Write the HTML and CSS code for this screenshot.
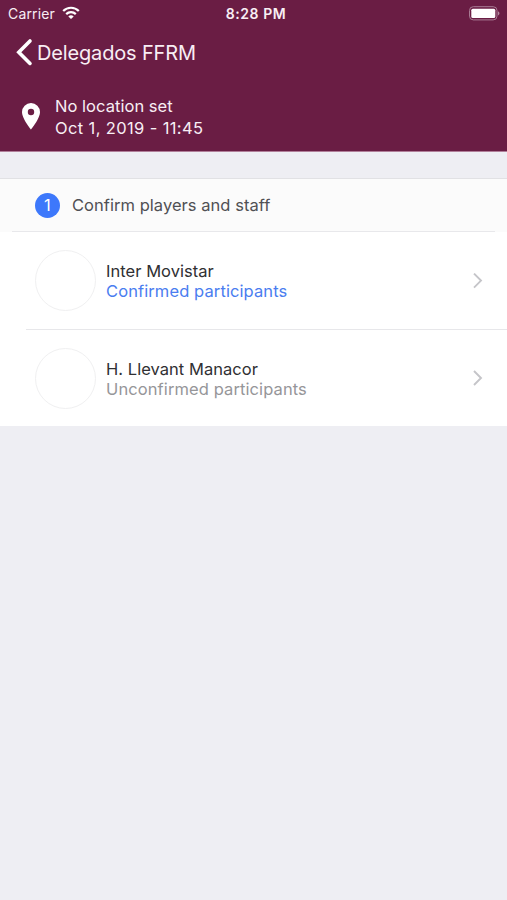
FILE: index.html
```html
<!DOCTYPE html>
<html lang="en">
<head>
<meta charset="utf-8">
<title>Delegados FFRM</title>
<link rel="stylesheet" href="styles.css">
</head>
<body>
<header class="header">
  <div class="status">
    <div class="status-left"><span class="carrier">Carrier</span>
      <svg class="wifi" width="18" height="14" viewBox="0 0 18 14" fill="none" stroke="#fff" stroke-width="2.200"><path d="M1.200 5.100C5.500.6 12.500.6 16.800 5.100M4.200 8.100c2.700-2.700 6.900-2.700 9.600 0"/><path d="M6.300 10.400Q9 8.200 11.700 10.400L9 13.100Z" fill="#fff" stroke="none"/></svg>
    </div>
    <span class="time">8:28 PM</span>
    <svg class="battery" width="32" height="15" viewBox="0 0 32 15"><rect x="1.500" y=".7" width="27.500" height="13.200" rx="3.800" fill="none" stroke="#a87c94"/><rect x="3.300" y="2.700" width="24" height="9.200" rx="1.500" fill="#fff"/><path d="M30 5.200c2 .8 2 3.400 0 4.200Z" fill="#b38aa0"/></svg>
  </div>
  <nav class="nav">
    <svg class="back" width="18" height="28" viewBox="0 0 18 28" fill="none" stroke="#fff" stroke-width="3.600" stroke-linecap="round"><path d="M15 3 3.800 14.200l11.200 11.200"/></svg>
    <span class="title">Delegados FFRM</span>
  </nav>
  <div class="match">
    <svg class="pin" width="18" height="27" viewBox="0 0 18 27"><path fill="#fff" fill-rule="evenodd" d="M9 0a9 9 0 0 0-9 9c0 6.700 9 17.600 9 17.600S18 15.700 18 9a9 9 0 0 0-9-9Zm0 5.800a3.200 3.200 0 1 1 0 6.400 3.200 3.200 0 0 1 0-6.400Z"/></svg>
    <div class="info"><div><span class="location">No location set</span></div><div><span class="date">Oct 1, 2019 - 11:45</span></div></div>
  </div>
</header>
<main class="content">
  <div class="step"><span class="number">1</span><span class="step-title">Confirm players and staff</span></div>
  <div class="team">
    <div class="avatar"></div>
    <div class="details"><div><span class="name">Inter Movistar</span></div><div><span class="state confirmed">Confirmed participants</span></div></div>
    <svg class="chevron" width="10" height="16" viewBox="0 0 10 16" fill="none" stroke="#c5c5c9" stroke-width="1.900"><path d="m1 .6 7 7-7 7"/></svg>
  </div>
  <div class="team">
    <div class="avatar"></div>
    <div class="details"><div><span class="name">H. Llevant Manacor</span></div><div><span class="state">Unconfirmed participants</span></div></div>
    <svg class="chevron" width="10" height="16" viewBox="0 0 10 16" fill="none" stroke="#c5c5c9" stroke-width="1.900"><path d="m1 1 7 7-7 7"/></svg>
  </div>
</main>
</body>
</html>
```
FILE: styles.css
```css
* { box-sizing: border-box; }
body { margin: 0; min-height: 900px; background: #eeeef3; font-family: Inter, sans-serif; font-size: 16.5px; letter-spacing: .04px; }
svg { display: block; flex: none; }
span { white-space: nowrap; }
.header { height: 152px; background: #6a1d44; border-bottom: 1px solid #b17f9a; color: #f8eef4; }
.status { height: 26px; display: grid; grid-template-columns: 1fr auto 1fr; align-items: center; padding: 0 7px 0 8px; }
.status-left { display: flex; align-items: center; gap: 7px; }
.carrier { font-size: 14px; letter-spacing: .15px; }
.time { font-size: 14px; font-weight: 600; letter-spacing: .55px; margin-left: 4px; }
.battery { justify-self: end; }
.nav { height: 52px; display: flex; align-items: center; padding-left: 15px; gap: 4px; }
.title { font-size: 20px; letter-spacing: -.16px; padding-top: 1px; }
.match { display: flex; align-items: center; height: 77px; padding-left: 22px; gap: 15px; }
.info { line-height: 22px; }
.date { letter-spacing: .37px; }
.content { margin-top: 26px; border-top: 1px solid #e1e1e4; background: #fff; }
.step { height: 53px; display: flex; align-items: center; padding-left: 35px; gap: 12px; color: #505054; background: linear-gradient(#e8e8eb, #e8e8eb) 12px 52px / calc(100% - 24px) 1px no-repeat #fbfbfb; }
.step-title { margin-top: -2px; }
.number { width: 25px; height: 25px; border-radius: 50%; background: #3d78fb; color: #fff; text-align: center; line-height: 25px; }
.team { height: 98px; display: flex; align-items: center; padding: 0 24px 0 9px; margin-left: 26px; border-bottom: 1px solid #e7e7ea; }
.team:last-child { height: 96px; border: 0; }
.avatar { width: 61px; height: 61px; flex: none; border: 1px solid #f0f0f1; border-radius: 50%; }
.details { flex: 1; margin-left: 10px; line-height: 20px; }
.team:last-child .details { padding-top: 2px; }
.name { color: #303033; }
.state { color: #969699; letter-spacing: .1px; }
.confirmed { color: #4a7df0; }
```
